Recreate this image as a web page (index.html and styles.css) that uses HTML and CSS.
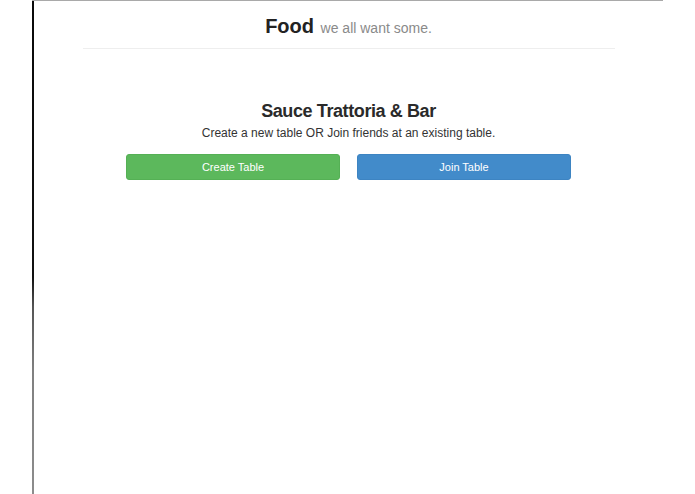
FILE: index.html
```html
<!DOCTYPE html>
<html lang="en">
<head>
<meta charset="utf-8">
<title>Food</title>
<link rel="stylesheet" href="styles.css">
</head>
<body>
<div class="frame">
  <div class="container">
    <header class="page-header">
      <h1 class="brand">Food <small class="tagline">we all want some.</small></h1>
    </header>
    <main class="intro">
      <h2 class="venue">Sauce Trattoria &amp; Bar</h2>
      <p class="lead">Create a new table OR Join friends at an existing table.</p>
      <div class="actions">
        <button class="btn btn-success" type="button">Create Table</button>
        <button class="btn btn-primary" type="button">Join Table</button>
      </div>
    </main>
  </div>
</div>
</body>
</html>
```
FILE: styles.css
```css
html, body {
  margin: 0;
  padding: 0;
  background: #fff;
}

body {
  font-family: "Liberation Sans", Arial, Helvetica, sans-serif;
  color: #333;
  width: 695px;
  height: 494px;
  overflow: hidden;
}

.frame {
  box-sizing: border-box;
  margin-left: 32px;
  width: 631px;
  height: 494px;
  border-top: 1px solid #a9a9a9;
  padding-left: 2px;
  padding-top: 14px;
  background: linear-gradient(to bottom, #0a0a0a 0, #111 56%, #555 62%, #808080 75%, #8c8c8c 100%) left top / 2px 100% no-repeat;
}

.container {
  width: 532px;
  margin: 0 auto;
}

.page-header {
  border-bottom: 1px solid #eeeeee;
  padding-bottom: 9px;
  text-align: center;
}

.brand {
  margin: 0;
  font-size: 20px;
  line-height: 22px;
  font-weight: bold;
  color: #222;
}

.tagline {
  font-size: 14px;
  font-weight: normal;
  color: #8a8a8a;
  margin-left: 1px;
}

.intro {
  text-align: center;
  padding: 0 43.5px;
}

.venue {
  margin: 51px 0 0;
  font-size: 18px;
  line-height: 22px;
  font-weight: bold;
  letter-spacing: -0.4px;
  color: #2a2a2a;
}

.lead {
  margin: 3px 0 0;
  font-size: 12px;
  line-height: 17px;
  color: #333;
}

.actions {
  margin-top: 11.5px;
  display: grid;
  grid-template-columns: 1fr 1fr;
  gap: 17px;
}

.btn {
  box-sizing: border-box;
  height: 26px;
  border-radius: 3px;
  border: 1px solid transparent;
  font-family: "Liberation Sans", Arial, Helvetica, sans-serif;
  font-size: 11px;
  color: #fff;
  padding: 0;
  cursor: pointer;
}

.btn-success {
  background: #5cb85c;
  border-color: #55b055;
}

.btn-primary {
  background: #428bca;
  border-color: #3d84c2;
}
```
